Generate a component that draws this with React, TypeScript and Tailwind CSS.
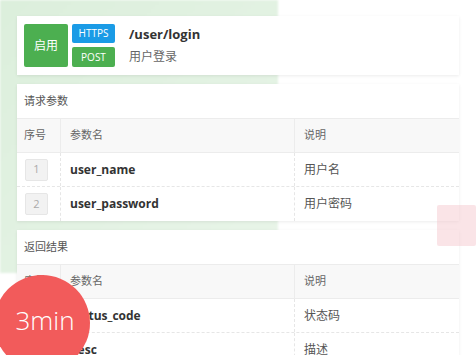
const font = "font-['Open_Sans','Noto_Sans_CJK_SC',sans-serif]";

interface Row {
  name: string;
  desc: string;
}

const reqRows: Row[] = [
  { name: 'user_name', desc: '用户名' },
  { name: 'user_password', desc: '用户密码' },
];

const resRows: Row[] = [
  { name: 'status_code', desc: '状态码' },
  { name: 'desc', desc: '描述' },
];

function ParamTable({ title, rows }: { title: string; rows: Row[] }) {
  return (
    <div className="bg-white shadow-[0_1px_3px_rgba(0,0,0,0.08)]">
      <div className="h-[34px] flex items-center px-[7px] text-[11px] text-[#555]">{title}</div>
      <div className="grid grid-cols-[43px_234px_1fr] h-[35px] bg-[#f8f8f8] border-y border-[#ececec] text-[11px] text-[#666] items-center">
        <div className="pl-[7px] h-full flex items-center">序号</div>
        <div className="pl-[9px] h-full flex items-center border-l border-[#ececec]">参数名</div>
        <div className="pl-[9px] h-full flex items-center border-l border-[#ececec]">说明</div>
      </div>
      {rows.map((r, i) => (
        <div
          key={r.name}
          className="grid grid-cols-[43px_234px_1fr] h-[34px] border-b border-dashed border-[#e6e6e6] items-center last:border-b-0"
        >
          <div className="pl-[8px] h-full flex items-center">
            <span className="w-[23px] h-[22px] bg-[#f2f2f2] border border-[#e6e6e6] rounded-[2px] text-[11px] text-[#aaa] flex items-center justify-center">
              {i + 1}
            </span>
          </div>
          <div className="pl-[9px] h-full flex items-center border-l border-dashed border-[#e6e6e6] text-[12px] font-bold text-[#333]">
            {r.name}
          </div>
          <div className="pl-[9px] h-full flex items-center border-l border-dashed border-[#e6e6e6] text-[12px] text-[#555]">
            {r.desc}
          </div>
        </div>
      ))}
    </div>
  );
}

export default function App() {
  return (
    <div className={`relative w-[476px] h-[355px] overflow-hidden bg-white ${font}`}>
      {/* soft green backdrop */}
      <div className="absolute left-0 top-0 w-[278px] h-[273px] bg-gradient-to-br from-[#dcefdc] to-[#e9f5e9] blur-[1px]" />

      <div className="relative pl-[17px] pt-[16px] w-[459px] flex flex-col gap-[9px]">
        <div className="bg-white h-[59px] p-[7px] flex items-center shadow-[0_1px_3px_rgba(0,0,0,0.08)]">
          <div className="w-[44px] h-[43px] bg-[#4caf50] rounded-[2px] text-white text-[12px] flex items-center justify-center">
            启用
          </div>
          <div className="ml-[4px] flex flex-col gap-[4px]">
            <span className="w-[43px] h-[19px] bg-[#1a9be6] rounded-[2px] text-white text-[10px] flex items-center justify-center">
              HTTPS
            </span>
            <span className="w-[43px] h-[20px] bg-[#4caf50] rounded-[2px] text-white text-[10px] flex items-center justify-center">
              POST
            </span>
          </div>
          <div className="ml-[14px] flex flex-col gap-[7px] -mt-[1px]">
            <span className="text-[13px] font-bold text-[#333] leading-[16px]">/user/login</span>
            <span className="text-[12px] text-[#666] leading-[16px]">用户登录</span>
          </div>
        </div>

        <ParamTable title="请求参数" rows={reqRows} />
        <ParamTable title="返回结果" rows={resRows} />
      </div>

      {/* pink marker */}
      <div className="absolute left-[437px] top-[205px] w-[39px] h-[41px] bg-[#f4c3ca]/45 rounded-[2px]" />

      {/* timer badge */}
      <div className="absolute left-[-6px] top-[275px] w-[96px] h-[96px] rounded-full bg-[#f25b5b] flex items-start justify-center pt-[32px]">
        <span className="text-white text-[26px] font-light leading-none pl-[6px]">3min</span>
      </div>
    </div>
  );
}
